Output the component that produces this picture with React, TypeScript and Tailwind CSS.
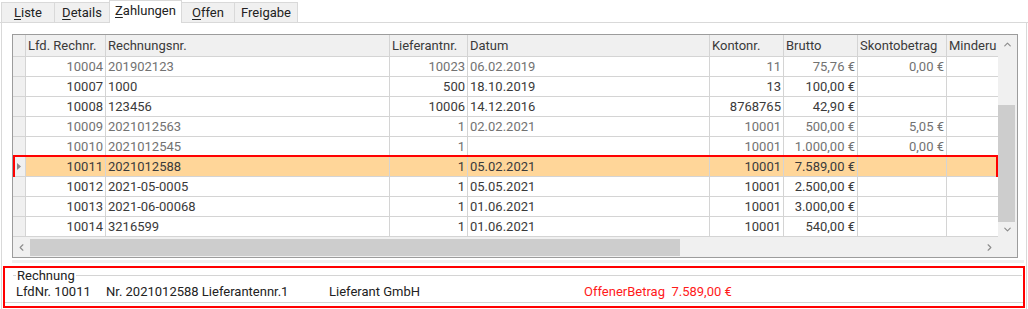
import { ChevronUp, ChevronDown, ChevronLeft, ChevronRight } from 'lucide-react'

const tabs = [
  { key: 'L', rest: 'iste', w: 'w-[54px]' },
  { key: 'D', rest: 'etails', w: 'w-[56px]' },
  { key: 'Z', rest: 'ahlungen', w: 'w-[73px]', active: true },
  { key: 'O', rest: 'ffen', w: 'w-[54px]' },
  { key: '', rest: 'Freigabe', w: 'w-[64px]' },
]

const columns = [
  { title: 'Lfd. Rechnr.', w: 'w-[80px]', right: true },
  { title: 'Rechnungsnr.', w: 'w-[284px]' },
  { title: 'Lieferantnr.', w: 'w-[78px]', right: true },
  { title: 'Datum', w: 'w-[242px]' },
  { title: 'Kontonr.', w: 'w-[74px]', right: true },
  { title: 'Brutto', w: 'w-[74px]', right: true },
  { title: 'Skontobetrag', w: 'w-[89px]', right: true },
  { title: 'Minderu', w: 'w-[90px]', right: true },
]

const rows = [
  { cells: ['10004', '201902123', '10023', '06.02.2019', '11', '75,76 €', '0,00 €', ''], grey: true },
  { cells: ['10007', '1000', '500', '18.10.2019', '13', '100,00 €', '', ''] },
  { cells: ['10008', '123456', '10006', '14.12.2016', '8768765', '42,90 €', '', ''] },
  { cells: ['10009', '2021012563', '1', '02.02.2021', '10001', '500,00 €', '5,05 €', ''], grey: true },
  { cells: ['10010', '2021012545', '1', '', '10001', '1.000,00 €', '0,00 €', ''], grey: true },
  { cells: ['10011', '2021012588', '1', '05.02.2021', '10001', '7.589,00 €', '', ''], selected: true },
  { cells: ['10012', '2021-05-0005', '1', '05.05.2021', '10001', '2.500,00 €', '', ''] },
  { cells: ['10013', '2021-06-00068', '1', '01.06.2021', '10001', '3.000,00 €', '', ''] },
  { cells: ['10014', '3216599', '1', '01.06.2021', '10001', '540,00 €', '', ''] },
]

export default function App() {
  return (
    <div className="w-[1028px] h-[309px] overflow-hidden bg-white font-['Roboto',sans-serif] text-[13px] text-[#222]">
      {/* tab strip */}
      <div className="flex items-end h-[23px] pl-[2px] border-b border-[#d9d9d9]">
        {tabs.map((t) => (
          <div
            key={t.rest}
            className={
              t.active
                ? `${t.w} h-[23px] -mb-px -ml-px bg-white border border-b-0 border-[#d9d9d9] flex items-center justify-center pb-[2px]`
                : `${t.w} h-[20px] -ml-px bg-[#f0f0f0] border border-b-0 border-[#d9d9d9] flex items-center justify-center`
            }
          >
            <span>
              {t.key && <span className="underline underline-offset-2">{t.key}</span>}
              {t.rest}
            </span>
          </div>
        ))}
      </div>

      {/* tab page */}
      <div className="ml-px w-[1026px] h-[286px] border-l border-r border-[#d9d9d9] pt-[11px] pl-[10px]">
        <div className="w-[1006px] h-[224px] border border-[#9c9c9c]">
          <div className="flex h-[202px]">
            <div className="w-[985px] overflow-hidden">
              {/* header */}
              <div className="flex h-[22px] bg-[#f0f0f0] border-b border-[#d4d4d4] text-[#3a3a3a]">
                <div className="w-[13px] shrink-0 border-r border-[#d4d4d4]" />
                {columns.map((c) => (
                  <div key={c.title} className={`${c.w} shrink-0 border-r border-[#d4d4d4] pl-[2px] leading-[21px] whitespace-nowrap overflow-hidden`}>
                    {c.title}
                  </div>
                ))}
              </div>
              {/* rows */}
              {rows.map((r) => (
                <div
                  key={r.cells[0]}
                  className={`relative flex h-[20px] border-b border-[#d4d4d4] ${r.grey ? 'text-[#727272]' : 'text-[#3a3a3a]'} ${r.selected ? 'bg-[#ffd699]' : 'bg-white'}`}
                >
                  <div className="w-[13px] shrink-0 bg-[#f0f0f0] border-r border-[#d4d4d4] flex items-center justify-center">
                    {r.selected && (
                      <svg width="4" height="7" viewBox="0 0 4 7">
                        <path d="M0 0 L4 3.5 L0 7 Z" fill="#8a8a8a" />
                      </svg>
                    )}
                  </div>
                  {r.cells.map((v, i) => (
                    <div
                      key={i}
                      className={`${columns[i].w} shrink-0 border-r border-[#d4d4d4] leading-[19px] whitespace-nowrap overflow-hidden ${columns[i].right ? 'text-right pr-[2px]' : 'pl-[2px]'}`}
                    >
                      {v}
                    </div>
                  ))}
                  {r.selected && (
                    <div className="absolute left-0 top-[-2px] w-[985px] h-[24px] border-2 border-[#ff0000]" />
                  )}
                </div>
              ))}
            </div>
            {/* vertical scrollbar */}
            <div className="w-[19px] bg-[#f0f0f0] flex flex-col">
              <div className="h-[18px] flex items-center justify-center">
                <ChevronUp size={11} strokeWidth={2.5} className="text-[#8c8c8c]" />
              </div>
              <div className="flex-1 flex flex-col pr-[2px]">
                <div className="h-[52px]" />
                <div className="h-[117px] bg-[#cdcdcd]" />
              </div>
              <div className="h-[15px] flex items-center justify-center">
                <ChevronDown size={11} strokeWidth={2.5} className="text-[#8c8c8c]" />
              </div>
            </div>
          </div>
          {/* horizontal scrollbar */}
          <div className="flex h-[20px] bg-[#f0f0f0]">
            <div className="w-[985px] flex items-center">
              <div className="w-[17px] flex items-center justify-center">
                <ChevronLeft size={11} strokeWidth={2.5} className="text-[#8c8c8c]" />
              </div>
              <div className="w-[650px] h-[17px] bg-[#cdcdcd]" />
              <div className="flex-1" />
              <div className="w-[17px] flex items-center justify-center">
                <ChevronRight size={11} strokeWidth={2.5} className="text-[#8c8c8c]" />
              </div>
            </div>
            <div className="w-[19px]" />
          </div>
        </div>

        <div className="mt-[2px] w-[1012px] h-[3px] bg-[#f0f0f0]" />

        {/* invoice summary */}
        <div className="-ml-[9px] mt-[3px] w-[1022px] h-[42px] border-2 border-[#ff0000]">
          <div className="pl-[8px] pr-[1px] border-b border-[#d4d4d4]">
            <fieldset className="border-t border-[#d4d4d4] pl-[3px] pb-[2px]">
              <legend className="px-0 text-[13px] leading-[15px] text-[#222]">
                <span className="pl-[1px] pr-[1px]">Rechnung</span>
              </legend>
              <div className="flex h-[17px] items-center whitespace-pre">
                <span className="w-[90px]">LfdNr. 10011</span>
                <span className="w-[223px]">Nr. 2021012588 Lieferantennr.1</span>
                <span className="w-[255px]">Lieferant GmbH</span>
                <span className="text-[#ff1a1a]">OffenerBetrag  7.589,00 €</span>
              </div>
            </fieldset>
          </div>
        </div>
      </div>
    </div>
  )
}
